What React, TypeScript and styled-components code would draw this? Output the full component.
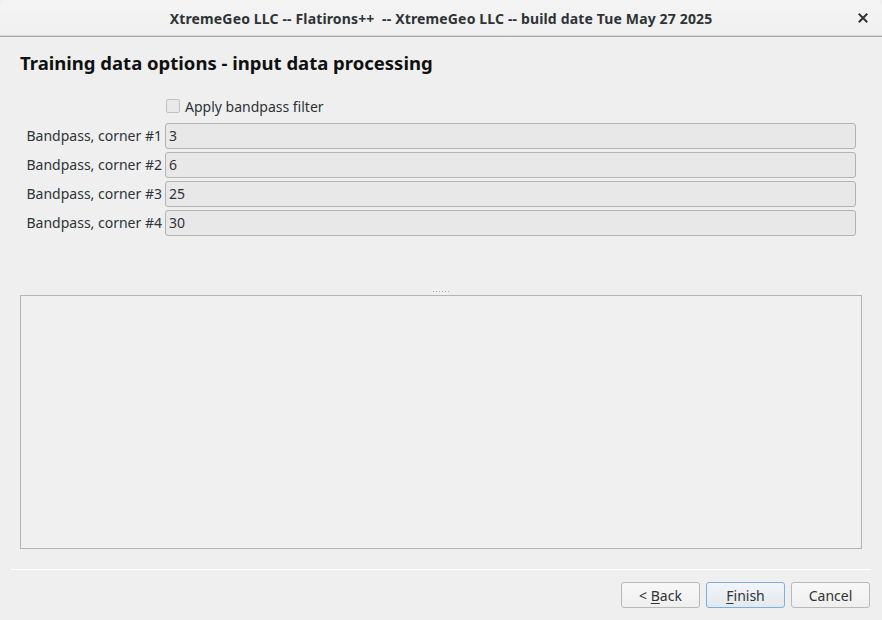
import styled, { createGlobalStyle } from "styled-components"

const GlobalStyle = createGlobalStyle`
  html, body {
    margin: 0;
    padding: 0;
    background: #efefef;
  }

  body {
    font-family: "Noto Sans", "Open Sans", sans-serif;
    font-size: 14px;
    color: #2e3436;
  }
`

const fields = [
  { label: "Bandpass, corner #1", value: "3" },
  { label: "Bandpass, corner #2", value: "6" },
  { label: "Bandpass, corner #3", value: "25" },
  { label: "Bandpass, corner #4", value: "30" },
]

export default function App() {
  return (
    <>
      <GlobalStyle />
      <Window>
        <TitleBar>
          <TitleText>
            XtremeGeo LLC -- Flatirons++&nbsp; -- XtremeGeo LLC -- build date
            Tue May 27 2025
          </TitleText>
          <CloseButton aria-label="Close">
            <svg width="10" height="10" viewBox="0 0 10 10">
              <path
                d="M1.5 1.5 L8.5 8.5 M8.5 1.5 L1.5 8.5"
                stroke="#2e3436"
                strokeWidth="2"
                strokeLinecap="square"
              />
            </svg>
          </CloseButton>
        </TitleBar>

        <Body>
          <Heading>Training data options - input data processing</Heading>

          <Form>
            <span />
            <CheckRow>
              <CheckBox />
              <span>Apply bandpass filter</span>
            </CheckRow>

            {fields.map(({ label, value }) => (
              <FieldRow key={label}>
                <FieldLabel>{label}</FieldLabel>
                <Field>{value}</Field>
              </FieldRow>
            ))}
          </Form>

          <Splitter>
            <Grip />
          </Splitter>
          <LogArea />

          <Separator />

          <ButtonBar>
            <Button>
              <span>
                &lt;&nbsp;<u>B</u>ack
              </span>
            </Button>
            <Button $focused>
              <span>
                <u>F</u>inish
              </span>
            </Button>
            <Button>
              <span>Cancel</span>
            </Button>
          </ButtonBar>
        </Body>
      </Window>
    </>
  )
}

const Window = styled.div`
  width: 882px;
  height: 620px;
  display: flex;
  flex-direction: column;
  background: #efefef;
  overflow: hidden;
`

const TitleBar = styled.div`
  height: 36px;
  flex-shrink: 0;
  position: relative;
  display: flex;
  align-items: center;
  justify-content: center;
  background: linear-gradient(#f4f4f4, #f0f0f0);
  border-bottom: 1px solid #a9a9a9;
  box-shadow: inset 0 -1px 0 #d8d8d8;
  border-top-left-radius: 6px;
  border-top-right-radius: 6px;
`

const TitleText = styled.span`
  font-weight: 700;
  font-size: 14px;
  color: #2e3436;
  letter-spacing: 0.15px;
`

const CloseButton = styled.div`
  position: absolute;
  right: 14px;
  top: 13px;
  display: flex;
`

const Body = styled.div`
  flex: 1;
  display: flex;
  flex-direction: column;
`

const Heading = styled.h1`
  margin: 13px 0 0 20px;
  font-size: 18.5px;
  font-weight: 700;
  line-height: 25px;
  color: #101010;
`

const Form = styled.div`
  display: grid;
  grid-template-columns: 138px 691px;
  column-gap: 3px;
  row-gap: 3px;
  margin: 22px 0 0 24px;
`

const CheckRow = styled.label`
  display: flex;
  align-items: center;
  gap: 5px;
  height: 18px;
  margin-bottom: 5px;
`

const CheckBox = styled.span`
  width: 12px;
  height: 12px;
  margin-left: 1px;
  border: 1px solid #c2c2c2;
  border-radius: 2px;
  background: #e9e9e9;
`

const FieldRow = styled.div`
  display: contents;
`

const FieldLabel = styled.span`
  text-align: right;
  line-height: 26px;
  white-space: nowrap;
`

const Field = styled.div`
  height: 26px;
  box-sizing: border-box;
  border: 1px solid #b3b3b3;
  border-radius: 3px;
  background: #e8e8e8;
  padding: 0 3px;
  line-height: 24px;
`

const Splitter = styled.div`
  height: 7px;
  margin-top: 52px;
  display: flex;
  justify-content: center;
  align-items: center;
`

const Grip = styled.span`
  width: 17px;
  height: 1px;
  margin-left: 1px;
  background: repeating-linear-gradient(
    to right,
    #a8a8a8 0,
    #a8a8a8 1px,
    transparent 1px,
    transparent 3px
  );
`

const LogArea = styled.div`
  margin: 0 20px;
  height: 254px;
  box-sizing: border-box;
  border: 1px solid #b4b4b4;
  background: #f0f0f0;
`

const Separator = styled.div`
  height: 1px;
  margin: 20px 11px 0 11px;
  background: #ffffff;
`

const ButtonBar = styled.div`
  display: flex;
  justify-content: flex-end;
  gap: 6px;
  margin: 12px 12px 0 0;
`

const Button = styled.div<{ $focused?: boolean }>`
  width: 79px;
  height: 26px;
  box-sizing: border-box;
  display: flex;
  align-items: center;
  justify-content: center;
  border-radius: 3px;
  border: 1px solid ${p => (p.$focused ? "#7eaee0" : "#b8b8b8")};
  background: ${p =>
    p.$focused
      ? "linear-gradient(#f2f4f7, #e4e9ef)"
      : "linear-gradient(#f8f8f8, #efefef)"};
  color: #2e3436;

  u {
    text-underline-offset: 2px;
  }
`
